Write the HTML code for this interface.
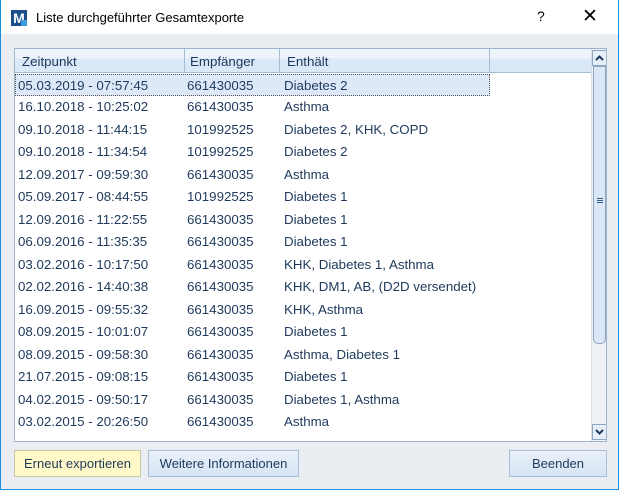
<!DOCTYPE html>
<html><head><meta charset="utf-8"><style>
*{margin:0;padding:0;box-sizing:border-box}
body{width:619px;height:490px;overflow:hidden;font-family:"Liberation Sans",sans-serif;font-size:13.3px;color:#1e395b;background:#eaedf1;position:relative}
.win{position:absolute;left:0;top:0;width:619px;height:490px;border:1px solid #1c8ee0;border-top:none;background:#eaedf1}
.title{position:absolute;left:0;top:0;width:617px;height:34px;background:#fff}
.title .t{position:absolute;left:35px;top:10px;font-size:13px;color:#000}
.logo{position:absolute;left:10px;top:10px;width:16px;height:16px;background:#1b4f8c;color:#fff;font-size:14px;font-weight:bold;line-height:16px;text-align:center;overflow:hidden}
.logo:after{content:"";position:absolute;right:0;bottom:0;width:6px;height:6px;background:#3d9be0}
.q{position:absolute;left:536px;top:8px;font-size:14px;color:#000}
.x{position:absolute;left:581px;top:5px;font-size:19px;color:#000}
.list{position:absolute;left:13px;top:48px;width:593px;height:394px;border:1px solid #9fb4cc;background:#fff;overflow:hidden}
.hdr{position:absolute;left:0;top:0;width:576px;height:24px;background:linear-gradient(#eef4fb 0,#eef4fb 40%,#dbe8f7 41%,#dbe8f7 100%);border-bottom:1px solid #a8bcd4}
.hdr span{position:absolute;top:5px}
.sep{position:absolute;top:0;width:1px;height:23px;background:#a8bcd4}
.row{position:absolute;left:0;height:22px;width:576px}
.row span{position:absolute;top:3px}
.sel{background:#dde9f8;border:1px dotted #555;width:475px}
.sb{position:absolute;left:576px;top:0;width:16px;height:392px;background:#eef2f7;border-left:1px solid #d5dde6}
.sbtn{position:absolute;left:0;width:15px;height:16px;border:1px solid #8ea6c2;background:#e6eef8}
.thumb{position:absolute;left:1px;top:17px;width:13px;height:278px;border:1px solid #8ea6c2;border-radius:0 0 5px 5px;background:#dbe7f6}
.btn{position:absolute;top:450px;height:27px;border:1px solid #a9bfd6;background:linear-gradient(#e9f0f9,#d6e4f5);text-align:center;line-height:25px;font-size:13px}
</style></head><body>
<div class="win">
<div class="title"><div class="logo">M</div><div class="t">Liste durchgeführter Gesamtexporte</div><div class="q">?</div><div class="x">✕</div></div>
<div class="list">
<div class="hdr"><span style="left:7px">Zeitpunkt</span><div class="sep" style="left:169px"></div><span style="left:175px">Empfänger</span><div class="sep" style="left:264px"></div><span style="left:272px">Enthält</span><div class="sep" style="left:474px"></div></div>
<div id="rows"></div>
<div class="sb"><div class="sbtn" style="top:1px"><svg width="13" height="14"><path d="M3 9 L6.5 5.5 L10 9" fill="none" stroke="#1e395b" stroke-width="2"/></svg></div><div class="thumb"><div style="position:absolute;left:3px;top:131px;width:6px;height:5px;border-top:1px solid #3a5f8f;border-bottom:1px solid #3a5f8f"><div style="margin-top:1px;height:1px;background:#3a5f8f"></div></div></div><div class="sbtn" style="top:375px"><svg width="13" height="14"><path d="M3 5 L6.5 8.5 L10 5" fill="none" stroke="#1e395b" stroke-width="2"/></svg></div></div>
</div>
<div class="btn" style="left:13px;width:127px;background:#fff8c8;border-color:#c8c8a8">Erneut exportieren</div>
<div class="btn" style="left:147px;width:151px">Weitere Informationen</div>
<div class="btn" style="left:508px;width:98px">Beenden</div>
</div>
<script>
var d=[["05.03.2019 - 07:57:45","661430035","Diabetes 2"],["16.10.2018 - 10:25:02","661430035","Asthma"],["09.10.2018 - 11:44:15","101992525","Diabetes 2, KHK, COPD"],["09.10.2018 - 11:34:54","101992525","Diabetes 2"],["12.09.2017 - 09:59:30","661430035","Asthma"],["05.09.2017 - 08:44:55","101992525","Diabetes 1"],["12.09.2016 - 11:22:55","661430035","Diabetes 1"],["06.09.2016 - 11:35:35","661430035","Diabetes 1"],["03.02.2016 - 10:17:50","661430035","KHK, Diabetes 1, Asthma"],["02.02.2016 - 14:40:38","661430035","KHK, DM1, AB, (D2D versendet)"],["16.09.2015 - 09:55:32","661430035","KHK, Asthma"],["08.09.2015 - 10:01:07","661430035","Diabetes 1"],["08.09.2015 - 09:58:30","661430035","Asthma, Diabetes 1"],["21.07.2015 - 09:08:15","661430035","Diabetes 1"],["04.02.2015 - 09:50:17","661430035","Diabetes 1, Asthma"],["03.02.2015 - 20:26:50","661430035","Asthma"]];
var h="";d.forEach(function(r,i){h+='<div class="row'+(i==0?' sel':'')+'" style="top:'+(25+i*22.47)+'px"><span style="left:'+(i==0?2:3)+'px">'+r[0]+'</span><span style="left:'+(i==0?171:172)+'px">'+r[1]+'</span><span style="left:'+(i==0?268:269)+'px">'+r[2]+'</span></div>'});
document.getElementById("rows").innerHTML=h;
</script>
</body></html>
